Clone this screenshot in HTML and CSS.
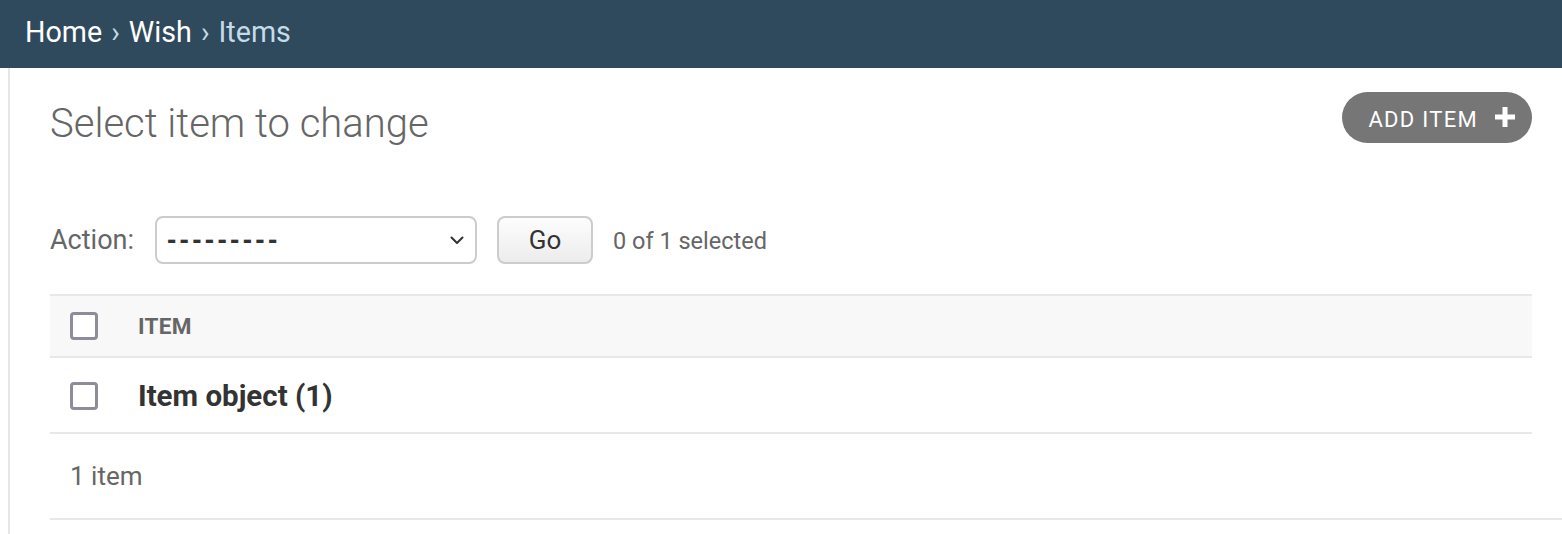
FILE: index.html
```html
<!DOCTYPE html>
<html lang="en">
<head>
<meta charset="utf-8">
<title>Select item to change</title>
<link rel="stylesheet" href="styles.css">
</head>
<body>
<header class="crumbs">
  <a class="crumb" href="#">Home</a><span class="sep">›</span><a class="crumb" href="#">Wish</a><span class="sep">›</span><span class="current">Items</span>
</header>
<div class="main">
  <div class="nav-edge"></div>
  <div class="content">
    <div class="title-row">
      <h1 class="title">Select item to change</h1>
      <a class="addlink" href="#">ADD ITEM
        <svg class="plus" width="20" height="20" viewBox="0 0 20 20"><path d="M7.5 0h5v7.5H20v5h-7.5V20h-5v-7.5H0v-5h7.5z" fill="#fff"/></svg>
      </a>
    </div>
    <div class="actions">
      <span class="action-label">Action:</span>
      <div class="select">
        <span class="select-text">---------</span>
        <svg class="chevron" width="14" height="9" viewBox="0 0 14 9"><path d="M1.5 1.5 7 7l5.5-5.5" fill="none" stroke="#333" stroke-width="2" stroke-linecap="round" stroke-linejoin="round"/></svg>
      </div>
      <button class="go" type="button">Go</button>
      <span class="counter">0 of 1 selected</span>
    </div>
    <table class="results">
      <thead>
        <tr class="head-row">
          <th class="check-cell"><span class="checkbox"></span></th>
          <th class="col">ITEM</th>
        </tr>
      </thead>
      <tbody>
        <tr class="row">
          <td class="check-cell"><span class="checkbox"></span></td>
          <th class="cell">Item object (1)</th>
        </tr>
      </tbody>
    </table>
    <p class="paginator">1 item</p>
  </div>
</div>
</body>
</html>
```

FILE: styles.css
```css
html, body {
  margin: 0;
  padding: 0;
  background: #fff;
}
body {
  font-family: Roboto, "Liberation Sans", sans-serif;
  color: #333;
  overflow: hidden;
}
.crumbs {
  height: 68px;
  box-sizing: border-box;
  background: #2f4a5d;
  display: flex;
  align-items: center;
  padding: 0 25px 4px;
  font-size: 28.7px;
  color: #c4dce8;
}
.crumb {
  color: #fff;
  text-decoration: none;
}
.sep {
  color: #c4dce8;
  margin: 0 9px;
}
.current {
  color: #c4dce8;
}
.main {
  display: flex;
  min-height: 466px;
}
.nav-edge {
  width: 8px;
  border-right: 2px solid #e6e6e6;
  flex: none;
}
.content {
  flex: 1;
  padding: 24px 30px 0 40px;
}
.title-row {
  display: flex;
  justify-content: space-between;
  align-items: center;
  height: 51px;
}
.title {
  margin: 0;
  font-size: 40px;
  font-weight: 300;
  color: #666;
  line-height: 51px;
  position: relative;
  top: 6px;
}
.addlink {
  display: flex;
  align-items: center;
  height: 51px;
  box-sizing: border-box;
  padding: 3px 17px 0 26px;
  border-radius: 26px;
  background: #767676;
  color: #fff;
  text-decoration: none;
  font-size: 22px;
  letter-spacing: 1.3px;
}
.plus {
  margin-left: 17px;
  margin-top: -4px;
}
.actions {
  display: flex;
  align-items: center;
  margin-top: 73px;
  height: 48px;
}
.action-label {
  font-size: 27px;
  color: #666;
  margin-right: 21px;
}
.select {
  width: 322px;
  height: 48px;
  box-sizing: border-box;
  border: 2px solid #ccc;
  border-radius: 8px;
  display: flex;
  align-items: center;
  justify-content: space-between;
  padding: 0 9px 0 10px;
}
.select-text {
  font-family: "Liberation Sans", sans-serif;
  font-size: 28px;
  font-weight: 700;
  letter-spacing: 3.3px;
  color: #333;
}
.chevron {
  margin-right: 2px;
}
.go {
  margin-left: 20px;
  width: 96px;
  height: 48px;
  box-sizing: border-box;
  border: 2px solid #ccc;
  border-radius: 8px;
  background: linear-gradient(#fdfdfd, #ececec);
  font-family: Roboto, "Liberation Sans", sans-serif;
  font-size: 26px;
  color: #333;
  padding: 0;
}
.counter {
  margin-left: 20px;
  font-size: 23.5px;
  color: #666;
  padding-top: 2px;
}
.results {
  margin-top: 30px;
  width: 100%;
  border-collapse: collapse;
}
.head-row {
  background: #f8f8f8;
  border-top: 2px solid #e8e8e8;
  border-bottom: 2px solid #e8e8e8;
}
.head-row th {
  height: 60px;
  padding: 0;
}
.row {
  border-bottom: 2px solid #e8e8e8;
}
.row td, .row th {
  height: 72px;
  padding: 0;
}
.check-cell {
  width: 68px;
  padding: 0 0 0 20px !important;
  text-align: left;
  vertical-align: middle;
}
.checkbox {
  display: block;
  width: 28px;
  height: 28px;
  box-sizing: border-box;
  border: 3px solid #8f8b98;
  border-radius: 4px;
  background: #fff;
}
.row .checkbox {
  margin-top: 2px;
}
.col {
  text-align: left;
  font-size: 22.5px;
  font-weight: 700;
  color: #666;
  letter-spacing: 0.3px;
}
.cell {
  text-align: left;
  font-size: 29.5px;
  font-weight: 700;
  color: #333;
  padding-top: 2px !important;
}
.paginator {
  margin: 0 -30px 0 0;
  height: 84px;
  box-sizing: content-box;
  display: flex;
  align-items: center;
  padding-left: 20px;
  font-size: 26px;
  color: #666;
  border-bottom: 2px solid #e8e8e8;
}
```
